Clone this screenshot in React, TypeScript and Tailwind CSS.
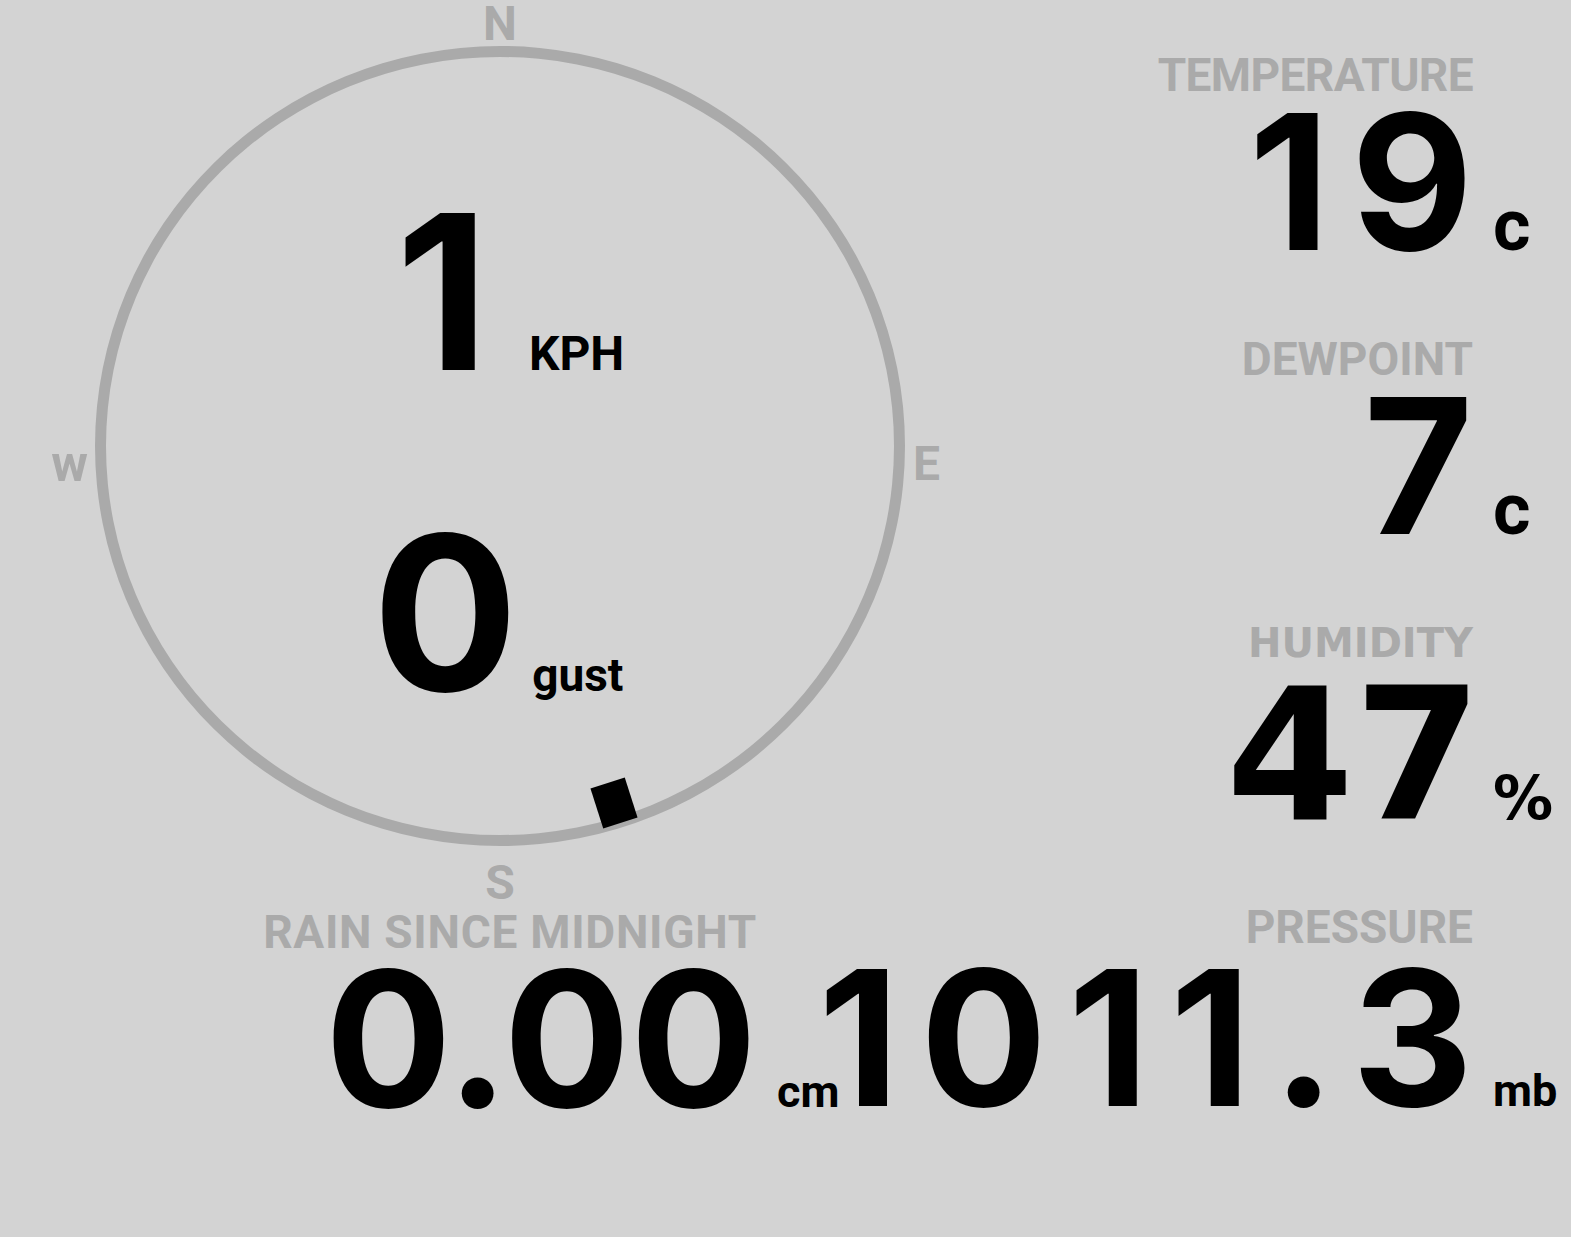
import React from "react";

const LABEL = "font-['Roboto',sans-serif] font-bold text-[#aaaaaa]";
const NUM = "font-['Inter',sans-serif] font-bold text-black";
const DJ = "font-['DejaVu_Sans',sans-serif] font-bold";

interface ReadingProps {
  label: string;
  value: string;
  unit: string;
  labelClass?: string;
  valueClass?: string;
  unitClass?: string;
  rowClass?: string;
}

function Reading({ label, value, unit, labelClass, valueClass, unitClass, rowClass }: ReadingProps) {
  return (
    <div className="flex flex-col h-[218px] shrink-0">
      <div className="flex pr-[98px] justify-end h-[46px]">
        <span className={labelClass ?? `${LABEL} text-[46px] leading-[46px] whitespace-nowrap`}>{label}</span>
      </div>
      <div className={`flex items-baseline h-[172px] ${rowClass ?? ""}`}>
        <div className="flex flex-1 justify-end min-w-0">
          <span className={valueClass ?? `${NUM} text-[188px] leading-[167px] whitespace-nowrap`}>{value}</span>
        </div>
        <div className="w-[98px] shrink-0 pl-[20px]">
          <span className={unitClass ?? `font-['Roboto',sans-serif] font-bold text-[45px] leading-none text-black`}>{unit}</span>
        </div>
      </div>
    </div>
  );
}

function Compass() {
  return (
    <div className="flex flex-col items-center h-[904px]">
      <div className={`${LABEL} text-[48px] leading-[45px] pt-[1px]`}>N</div>
      <div className="grid grid-cols-[1fr_auto_1fr] items-center w-full">
        <div className={`${LABEL} text-[50px] leading-none justify-self-end mr-[7px] pt-[36px]`}>w</div>
        <div className="relative w-[810px] h-[800px] rounded-[50%] border-[11px] border-[#aaaaaa] flex flex-col items-center pt-[127px]">
          <div className="flex items-baseline pl-[20px]">
            <span className={`${NUM} text-[216px] leading-none`}>1</span>
            <span className="font-['Roboto',sans-serif] font-bold text-[48px] ml-[40px]">KPH</span>
          </div>
          <div className="flex items-baseline mt-[105px] pr-[4px]">
            <span className={`${NUM} text-[216px] leading-none`}>0</span>
            <span className="font-['Roboto',sans-serif] font-bold text-[46px] ml-[14px]">gust</span>
          </div>
          <div className="absolute left-[490px] top-[725px] w-[36px] h-[42px] bg-black -rotate-[17.7deg]" />
        </div>
        <div className={`${LABEL} text-[48px] leading-none justify-self-start ml-[8px] pt-[36px]`}>E</div>
      </div>
      <div className={`${LABEL} text-[48px] leading-[73px]`}>S</div>
    </div>
  );
}

export default function App() {
  return (
    <div className="w-[1571px] h-[1237px] bg-[#d3d3d3] overflow-hidden">
      <div className="grid grid-cols-[1000px_minmax(0,1fr)]">
        <Compass />
        <div className="flex flex-col pt-[52px] gap-[66px] h-[904px]">
          <Reading
            label="TEMPERATURE"
            value="19"
            unit="c"
            labelClass={`${LABEL} text-[46px] leading-[46px] tracking-[-0.6px] whitespace-nowrap`}
            valueClass={`${NUM} text-[188px] leading-[167px] tracking-[21px] mr-[-21px] whitespace-nowrap`}
            unitClass="font-['Roboto',sans-serif] font-bold text-[72px] leading-none text-black"
          />
          <Reading
            label="DEWPOINT"
            value="7"
            unit="c"
            unitClass="font-['Roboto',sans-serif] font-bold text-[72px] leading-none text-black"
          />
          <Reading
            label="HUMIDITY"
            value="47"
            unit="%"
            labelClass={`${DJ} text-[#aaaaaa] text-[40px] leading-[46px] whitespace-nowrap`}
            valueClass={`${DJ} text-black text-[184px] leading-[178px] mr-[-9px] whitespace-nowrap`}
            unitClass={`${DJ} text-black text-[60px] leading-none`}
          />
        </div>
        <div className="flex justify-end pr-[145px] pt-[5px]">
          <div className="w-[855px]">
            <Reading
              label="RAIN SINCE MIDNIGHT"
              value="0.00"
              unit="cm"
              labelClass={`${LABEL} text-[46px] leading-[46px] tracking-[0.7px] whitespace-nowrap`}
            />
          </div>
        </div>
        <div>
          <Reading
            label="PRESSURE"
            value="1011.3"
            unit="mb"
            rowClass="mt-[4px]"
            valueClass={`${NUM} text-[188px] leading-[167px] tracking-[21px] mr-[-21px] whitespace-nowrap`}
          />
        </div>
      </div>
    </div>
  );
}
